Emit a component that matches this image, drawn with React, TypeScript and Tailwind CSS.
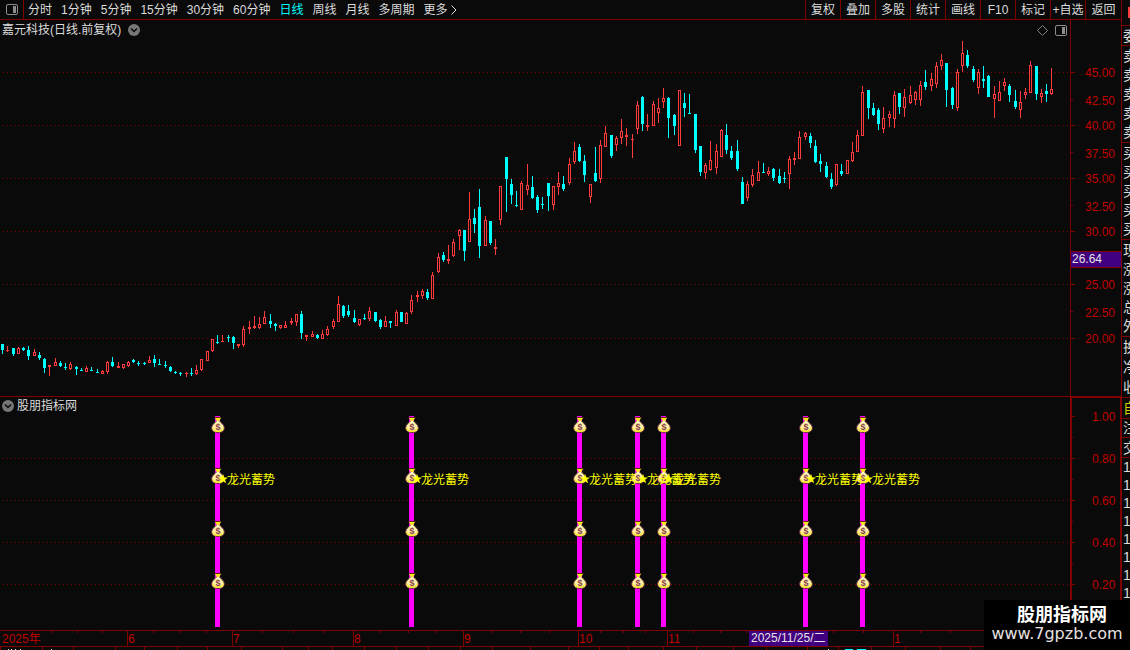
type Candle = [high: number, low: number, top: number, bottom: number, up: 0 | 1];

const FONT = "font-['Liberation_Sans','Noto_Sans_CJK_SC',sans-serif]";

const periods = [
  "分时",
  "1分钟",
  "5分钟",
  "15分钟",
  "30分钟",
  "60分钟",
  "日线",
  "周线",
  "月线",
  "多周期",
];

const tools = ["复权", "叠加", "多股", "统计", "画线", "F10", "标记", "+自选"];

// high, low, body top, body bottom, 1 = rising
const candles: Candle[] = [
  [344, 354, 344, 350, 0], [346, 352, 350, 351, 1], [348, 356, 348, 354, 0], [347, 354, 348, 354, 1],
  [347, 351, 348, 350, 0], [346, 360, 350, 356, 0], [349, 356, 352, 356, 1], [352, 360, 355, 358, 0],
  [358, 373, 359, 368, 0], [365, 376, 365, 367, 1], [358, 366, 362, 366, 1], [361, 367, 363, 366, 0],
  [363, 370, 367, 368, 0], [362, 370, 364, 369, 1], [366, 375, 367, 369, 0], [368, 371, 370, 371, 0],
  [366, 372, 368, 372, 1], [367, 371, 370, 371, 0], [369, 373, 372, 373, 0], [370, 374, 371, 374, 1],
  [361, 374, 362, 372, 1], [357, 367, 362, 366, 0], [362, 368, 366, 368, 1], [364, 369, 364, 368, 1],
  [361, 367, 362, 366, 1], [359, 363, 360, 362, 0], [361, 366, 363, 364, 0], [362, 365, 363, 364, 0],
  [356, 363, 360, 363, 1], [355, 367, 359, 363, 0], [359, 365, 364, 365, 0], [361, 368, 365, 366, 0],
  [366, 372, 367, 371, 0], [371, 374, 372, 373, 0], [372, 376, 373, 374, 0], [372, 377, 373, 374, 1],
  [368, 376, 373, 374, 0], [365, 375, 370, 374, 1], [359, 371, 359, 370, 1], [351, 361, 351, 361, 1],
  [339, 352, 339, 351, 1], [335, 344, 342, 343, 0], [335, 342, 341, 342, 1], [335, 342, 337, 338, 0],
  [336, 349, 337, 343, 0], [344, 348, 344, 346, 1], [326, 347, 329, 345, 1], [321, 334, 327, 329, 1],
  [316, 329, 326, 328, 1], [317, 329, 324, 328, 1], [311, 324, 317, 324, 1], [314, 328, 321, 324, 0],
  [323, 331, 324, 326, 0], [325, 329, 325, 328, 1], [321, 328, 325, 328, 1], [318, 325, 321, 323, 1],
  [314, 326, 314, 322, 1], [311, 339, 314, 333, 0], [335, 341, 335, 337, 1], [331, 337, 334, 337, 1],
  [334, 339, 335, 338, 0], [330, 339, 334, 339, 1], [326, 336, 329, 335, 1], [319, 329, 321, 327, 1],
  [296, 322, 304, 322, 1], [305, 318, 306, 316, 0], [305, 317, 311, 315, 0], [310, 323, 318, 322, 0],
  [319, 326, 319, 325, 1], [314, 320, 318, 319, 0], [307, 321, 311, 319, 1], [312, 322, 312, 321, 0],
  [319, 329, 320, 327, 0], [316, 327, 321, 327, 1], [321, 328, 321, 323, 0], [310, 326, 312, 326, 1],
  [312, 322, 312, 322, 0], [312, 324, 313, 324, 1], [295, 314, 300, 312, 1], [291, 302, 295, 297, 1],
  [289, 299, 291, 296, 1], [289, 300, 292, 298, 0], [272, 299, 275, 299, 1], [253, 273, 257, 272, 1],
  [252, 262, 255, 260, 0], [245, 264, 259, 261, 1], [239, 257, 242, 256, 1], [229, 250, 230, 236, 1],
  [230, 261, 230, 251, 0], [192, 242, 219, 242, 1], [209, 233, 218, 224, 0], [189, 258, 207, 246, 0],
  [216, 246, 220, 246, 1], [221, 245, 221, 243, 0], [239, 255, 247, 249, 1], [186, 225, 186, 220, 1],
  [157, 212, 157, 179, 0], [179, 204, 184, 195, 0], [191, 207, 205, 206, 0], [181, 210, 183, 210, 1],
  [164, 195, 185, 190, 1], [176, 199, 187, 198, 0], [195, 213, 197, 210, 0], [197, 209, 204, 205, 0],
  [183, 211, 183, 196, 0], [186, 210, 186, 205, 1], [172, 195, 183, 187, 1], [176, 191, 184, 189, 0],
  [158, 185, 164, 183, 1], [142, 164, 151, 162, 1], [144, 162, 147, 161, 0], [155, 182, 161, 175, 0],
  [184, 203, 184, 197, 1], [147, 182, 173, 181, 0], [140, 183, 145, 179, 1], [126, 147, 133, 147, 1],
  [135, 158, 135, 156, 0], [136, 151, 138, 145, 1], [119, 144, 131, 138, 1], [128, 146, 135, 137, 1],
  [134, 158, 139, 140, 1], [101, 134, 105, 129, 1], [96, 131, 97, 124, 0], [114, 131, 125, 127, 1],
  [101, 126, 104, 126, 1], [98, 123, 108, 113, 1], [88, 108, 98, 102, 1], [97, 138, 98, 118, 0],
  [114, 135, 115, 126, 0], [90, 146, 90, 146, 1], [93, 117, 103, 108, 0], [94, 114, 113, 114, 0],
  [114, 153, 114, 150, 0], [146, 176, 146, 172, 0], [163, 179, 165, 173, 1], [141, 171, 160, 170, 1],
  [144, 174, 151, 168, 1], [129, 157, 130, 157, 1], [124, 154, 135, 150, 0], [146, 160, 151, 158, 0],
  [140, 171, 151, 169, 0], [177, 204, 182, 204, 0], [181, 201, 184, 198, 1], [169, 187, 175, 185, 1],
  [161, 181, 172, 181, 1], [163, 173, 172, 173, 0], [167, 176, 171, 174, 1], [168, 181, 169, 178, 0],
  [169, 184, 176, 183, 0], [172, 183, 178, 179, 0], [156, 189, 159, 174, 1], [152, 165, 158, 160, 1],
  [131, 159, 137, 159, 1], [132, 140, 133, 137, 1], [133, 148, 136, 143, 0], [140, 163, 146, 162, 0],
  [154, 172, 161, 164, 0], [162, 178, 166, 177, 0], [173, 189, 179, 187, 0], [164, 186, 164, 185, 1],
  [164, 176, 171, 174, 0], [160, 174, 160, 174, 1], [142, 162, 152, 161, 1], [130, 152, 135, 152, 1],
  [86, 136, 92, 136, 1], [90, 119, 90, 108, 0], [103, 116, 108, 115, 0], [108, 130, 110, 124, 0],
  [107, 133, 118, 129, 1], [111, 127, 114, 118, 1], [91, 128, 95, 119, 1], [93, 114, 93, 107, 0],
  [89, 117, 97, 108, 1], [86, 104, 95, 103, 1], [91, 105, 92, 100, 1], [81, 106, 85, 100, 1],
  [70, 90, 82, 87, 0], [73, 91, 79, 86, 1], [62, 88, 66, 84, 1], [54, 70, 60, 66, 1],
  [63, 107, 63, 90, 0], [87, 109, 88, 105, 0], [69, 111, 72, 108, 1], [41, 72, 53, 66, 1],
  [50, 68, 55, 66, 0], [66, 82, 69, 80, 0], [69, 94, 72, 88, 1], [66, 88, 79, 81, 0],
  [75, 97, 76, 97, 0], [86, 118, 94, 99, 1], [81, 101, 92, 101, 1], [78, 91, 82, 86, 1],
  [84, 102, 86, 95, 0], [90, 109, 101, 107, 0], [91, 118, 102, 110, 1], [88, 99, 92, 95, 1],
  [61, 93, 65, 93, 1], [66, 100, 66, 94, 0], [89, 103, 93, 97, 1], [84, 102, 91, 94, 0],
  [68, 95, 89, 94, 1],
];

const priceLabels = [
  { text: "45.00", y: 72, major: true },
  { text: "42.50", y: 99, major: false },
  { text: "40.00", y: 125, major: true },
  { text: "37.50", y: 152, major: false },
  { text: "35.00", y: 178, major: true },
  { text: "32.50", y: 205, major: false },
  { text: "30.00", y: 231, major: true },
  { text: "25.00", y: 284, major: true },
  { text: "22.50", y: 311, major: false },
  { text: "20.00", y: 338, major: true },
];

const signalLabels = [
  { text: "1.00", y: 416 },
  { text: "0.80", y: 458 },
  { text: "0.60", y: 500 },
  { text: "0.40", y: 542 },
  { text: "0.20", y: 584 },
];

const signals = [217, 411, 579, 637, 663, 805, 862];
const bagRows = [417, 468, 521, 573];

const months = [
  { text: "6", x: 127 },
  { text: "7", x: 232 },
  { text: "8", x: 353 },
  { text: "9", x: 463 },
  { text: "10", x: 578 },
  { text: "11", x: 667 },
  { text: "1", x: 893 },
];

const weekTicks = [
  52, 77, 102, 153, 180, 206, 262, 293, 323, 380, 408, 436, 491, 520, 549, 600, 623, 645, 693, 720,
  746, 833, 863, 920, 950,
];

const lowerTicks = [
  0, 42, 73, 115, 144, 177, 207, 241, 282, 308, 332, 364, 396, 428, 460, 492, 530, 568, 599, 628, 663,
  696, 733, 766, 807, 838, 871, 905, 940, 970,
];

const candleX = (i: number) => Math.round(2.1 + i * 5.246);

function GridLine({ y }: { y: number }) {
  return (
    <line x1="3" x2="100%" y1={y + 0.5} y2={y + 0.5} stroke="#800000" strokeDasharray="1 3" />
  );
}

function CandleBar({ x, candle }: { x: number; candle: Candle }) {
  const [high, low, top, bottom, up] = candle;
  const color = up ? "#ff3c3c" : "#00ffff";
  return (
    <g>
      <rect x={x} y={high} width="1" height={low - high} fill={color} />
      <rect x={x - 1} y={top} width="3" height={bottom - top} fill={color} />
      {up === 1 && bottom - top > 2 && (
        <rect x={x} y={top + 1} width="1" height={bottom - top - 2} fill="#0a0a0a" />
      )}
    </g>
  );
}

function MoneyBag({ x, y }: { x: number; y: number }) {
  return (
    <g transform={`translate(${x - 6} ${y})`}>
      <path d="M4 1h6L8.500 3.500v2h-3v-2z" fill="#ffe81a" />
      <path d="M3.500.500h7" stroke="#5c2e10" />
      <path
        d="M5 4.5h4c1.2 1.6 4.3 3.200 4.300 6.300 0 3-2 4.700-6.300 4.700S.7 13.800.7 10.800C.7 7.700 3.800 6.100 5 4.500z"
        fill="#fff0a8"
        stroke="#6b3040"
      />
      <path d="M5.500 4h3v2h-3z" fill="#fff8c8" />
      <path
        d="M1.400 9.500c-.3 3.700 1.800 5.400 5.600 5.400s5.900-1.700 5.600-5.400c-.7 2.700-2.500 4-5.600 4s-4.900-1.300-5.600-4z"
        fill="#f7e51c"
      />
      <text x="7" y="13" textAnchor="middle" fill="#8a4048" className="text-[9px] font-bold">
        $
      </text>
    </g>
  );
}

function ToggleMark() {
  return (
    <svg width="12" height="12" viewBox="0 0 12 12" className="shrink-0">
      <circle cx="6" cy="6" r="6" fill="#767676" />
      <path d="M3 4.500 6 7.500 9 4.500" fill="none" stroke="#0a0a0a" strokeWidth="1.500" />
    </svg>
  );
}

function PanelIcon({ color }: { color: string }) {
  return (
    <svg width="12" height="11" viewBox="0 0 12 11" className="shrink-0">
      <rect x=".5" y=".5" width="11" height="10" rx="1.500" fill="none" stroke={color} />
      <rect x="7" y="2" width="3" height="7" fill={color} />
    </svg>
  );
}

function Toolbar() {
  return (
    <header className="flex h-5 items-stretch justify-between border-b border-[#800000] leading-[18px]">
      <div className="flex">
        <button aria-label="布局" className="flex w-6 items-center justify-center border-r border-[#800000]">
          <PanelIcon color="#8c8c8c" />
        </button>
        <nav className="flex gap-[9px] pl-1">
          {periods.map((p) => (
            <button key={p} className={p === "日线" ? "text-[#00ffff]" : "text-[#dcdcdc]"}>
              {p}
            </button>
          ))}
          <button className="flex items-center gap-[3px]">
            更多
            <svg width="6" height="10" viewBox="0 0 6 10">
              <path d="M.5.500 5 5 .5 9.500" fill="none" stroke="#dcdcdc" />
            </svg>
          </button>
        </nav>
      </div>
      <div className="flex">
        {tools.map((t) => (
          <button key={t} className="w-[35px] whitespace-nowrap border-l border-[#800000]">
            {t}
          </button>
        ))}
        <button className="w-9 border-l border-[#800000]">返回</button>
      </div>
    </header>
  );
}

function PriceChart() {
  return (
    <section className="flex">
      <div className="min-w-0 flex-1">
        <div className="flex h-5 items-center justify-between pl-[2px] pr-[3px]">
          <h1 className="flex items-center gap-[7px]">
            嘉元科技(日线.前复权)
            <button aria-label="展开">
              <ToggleMark />
            </button>
          </h1>
          <div className="flex items-center gap-[7px]">
            <svg width="11" height="11" viewBox="0 0 11 11">
              <path d="M5.500.500 10.500 5.500 5.500 10.500.500 5.500z" fill="none" stroke="#808080" />
            </svg>
            <PanelIcon color="#8c8c8c" />
          </div>
        </div>
        <svg className="block h-[356px] w-full" shapeRendering="crispEdges">
          <g transform="translate(0 -40)">
            {priceLabels.filter((l) => l.major).map((l) => (
              <GridLine key={l.y} y={l.y} />
            ))}
            {candles.map((c, i) => (
              <CandleBar key={i} x={candleX(i)} candle={c} />
            ))}
          </g>
        </svg>
      </div>
      <svg className="block h-[376px] w-[51px] shrink-0" shapeRendering="crispEdges">
        <g transform="translate(0 -20)">
          <rect width="1" height="396" fill="#800000" />
          {priceLabels.map((l) => (
            <g key={l.text}>
              <rect x="1" y={l.y} width={l.major ? 4 : 2} height="1" fill="#800000" />
              <text x="15" y={l.y + (l.major ? 5 : 6)} fill="#c00000">
                {l.text}
              </text>
            </g>
          ))}
          <rect x="1" y="251" width="50" height="17" fill="#800000" />
          <rect x="1" y="252" width="50" height="15" fill="#400080" />
          <text x="2" y="263" fill="#e6e6e6">
            26.64
          </text>
        </g>
      </svg>
    </section>
  );
}

function SignalChart() {
  return (
    <section className="flex border-t border-[#800000]">
      <div className="min-w-0 flex-1">
        <h2 className="flex h-[18px] items-center gap-[3px] pl-[2px]">
          <button aria-label="展开">
            <ToggleMark />
          </button>
          股朋指标网
        </h2>
        <svg className="block h-[215px] w-full">
          <g transform="translate(0 -415)">
            <g shapeRendering="crispEdges">
              {signalLabels.slice(1).map((l) => (
                <GridLine key={l.y} y={l.y} />
              ))}
              {signals.map((x) => (
                <rect key={x} x={x - 2} y="416" width="5" height="211" fill="#ff00ff" />
              ))}
            </g>
            {signals.map((x) => bagRows.map((y) => <MoneyBag key={`${x}-${y}`} x={x} y={y} />))}
            {signals.map((x) => (
              <g key={x} fill="#ffff00">
                <path
                  transform={`translate(${x + 6} 479)`}
                  d="M0-5 1.300-1.600 5-1.500 2.100.800 3.100 4.300 0 2.300-3.100 4.300-2.100.800-5-1.500-1.300-1.600z"
                />
                <text x={x + 10} y="484">
                  龙光蓄势
                </text>
              </g>
            ))}
          </g>
        </svg>
      </div>
      <svg className="block h-[233px] w-[51px] shrink-0" shapeRendering="crispEdges">
        <g transform="translate(0 -397)">
          <rect y="397" width="51" height="1" fill="#800000" />
          <rect y="397" width="2" height="233" fill="#800000" />
          <rect x="50" y="397" width="1" height="233" fill="#800000" />
          {signalLabels.map((l) => (
            <g key={l.text}>
              <rect x="2" y={l.y} width="3" height="1" fill="#800000" />
              <rect x="2" y={l.y + 21} width="1" height="1" fill="#800000" />
              <text x="22" y={l.y + 5} fill="#c00000">
                {l.text}
              </text>
            </g>
          ))}
        </g>
      </svg>
    </section>
  );
}

function TimeAxis() {
  return (
    <svg className="block h-5 w-full" shapeRendering="crispEdges">
      <rect width="100%" height="1" fill="#800000" />
      <rect y="16" width="100%" height="1" fill="#800000" />
      {weekTicks.map((x) => (
        <rect key={x} x={x} y="1" width="1" height="2" fill="#800000" />
      ))}
      {lowerTicks.map((x) => (
        <rect key={x} x={x} y="17" width="1" height="3" fill="#800000" />
      ))}
      {/* top edge of the status row below */}
      <path d="M8 19.500h1m2 0h1m3 0h1m4 0h1m30 0h1M828 19.500h1" stroke="#dcdcdc" />
      <path d="M845 19.500h8m4 0h9" stroke="#00ffff" />
      <text x="2" y="13" fill="#c00000">
        2025年
      </text>
      {months.map((m) => (
        <g key={m.x}>
          <rect x={m.x} y="1" width="1" height="15" fill="#800000" />
          <text x={m.x + 1} y="13" fill="#c00000">
            {m.text}
          </text>
        </g>
      ))}
      <rect x="749" y="1" width="79" height="15" fill="#400080" />
      <text x="751" y="12" fill="#e6e6e6">
        2025/11/25/二
      </text>
    </svg>
  );
}

function QuoteStrip() {
  const cell = "flex flex-col justify-around border-b border-[#800000] pl-px";
  return (
    <aside className="w-[9px] shrink-0 overflow-hidden border-l border-[#800000] text-[14px] leading-[18px] whitespace-nowrap">
      <div className="h-[26px] border-b border-[#800000] pl-[6px] pt-[7px]">
        <div className="h-[11px] w-2 bg-[#ff3c3c]" />
      </div>
      <div className={`${cell} h-5`}>
        <span>委</span>
      </div>
      <div className={`${cell} h-[97px]`}>
        {[5, 4, 3, 2, 1].map((n) => (
          <span key={n}>卖</span>
        ))}
      </div>
      <div className={`${cell} h-[97px]`}>
        {[1, 2, 3, 4, 5].map((n) => (
          <span key={n}>买</span>
        ))}
      </div>
      <div className={`${cell} h-[97px]`}>
        <span>现</span>
        <span>涨</span>
        <span>涨</span>
        <span>总</span>
        <span>外</span>
      </div>
      <div className={`${cell} h-[61px]`}>
        <span>换</span>
        <span>净</span>
        <span>收</span>
      </div>
      <div className={`${cell} h-[21px] text-[#d0d000]`}>
        <span>自</span>
      </div>
      <div className={`${cell} h-[19px]`}>
        <span>注</span>
      </div>
      <div className={`${cell} h-5`}>
        <span>交</span>
      </div>
      <div className="flex flex-col pl-px">
        {[1, 2, 3, 4, 5, 6, 7, 8].map((n) => (
          <span key={n}>1</span>
        ))}
      </div>
    </aside>
  );
}

export default function App() {
  return (
    <div className={`relative flex overflow-hidden bg-[#0a0a0a] text-[12px] text-[#dcdcdc] ${FONT}`}>
      <main className="min-w-0 flex-1">
        <Toolbar />
        <PriceChart />
        <SignalChart />
        <TimeAxis />
      </main>
      <QuoteStrip />
      <footer className="absolute right-0 bottom-0 h-[50px] w-[146px] bg-black pt-1 text-center whitespace-nowrap text-white">
        <p className="pl-[10px] text-[18px] leading-[22px] font-bold">股朋指标网</p>
        <p className="font-['DejaVu_Sans',sans-serif] text-[16px] leading-[16px] text-[#e8e0e0]">
          www.7gpzb.com
        </p>
      </footer>
    </div>
  );
}
